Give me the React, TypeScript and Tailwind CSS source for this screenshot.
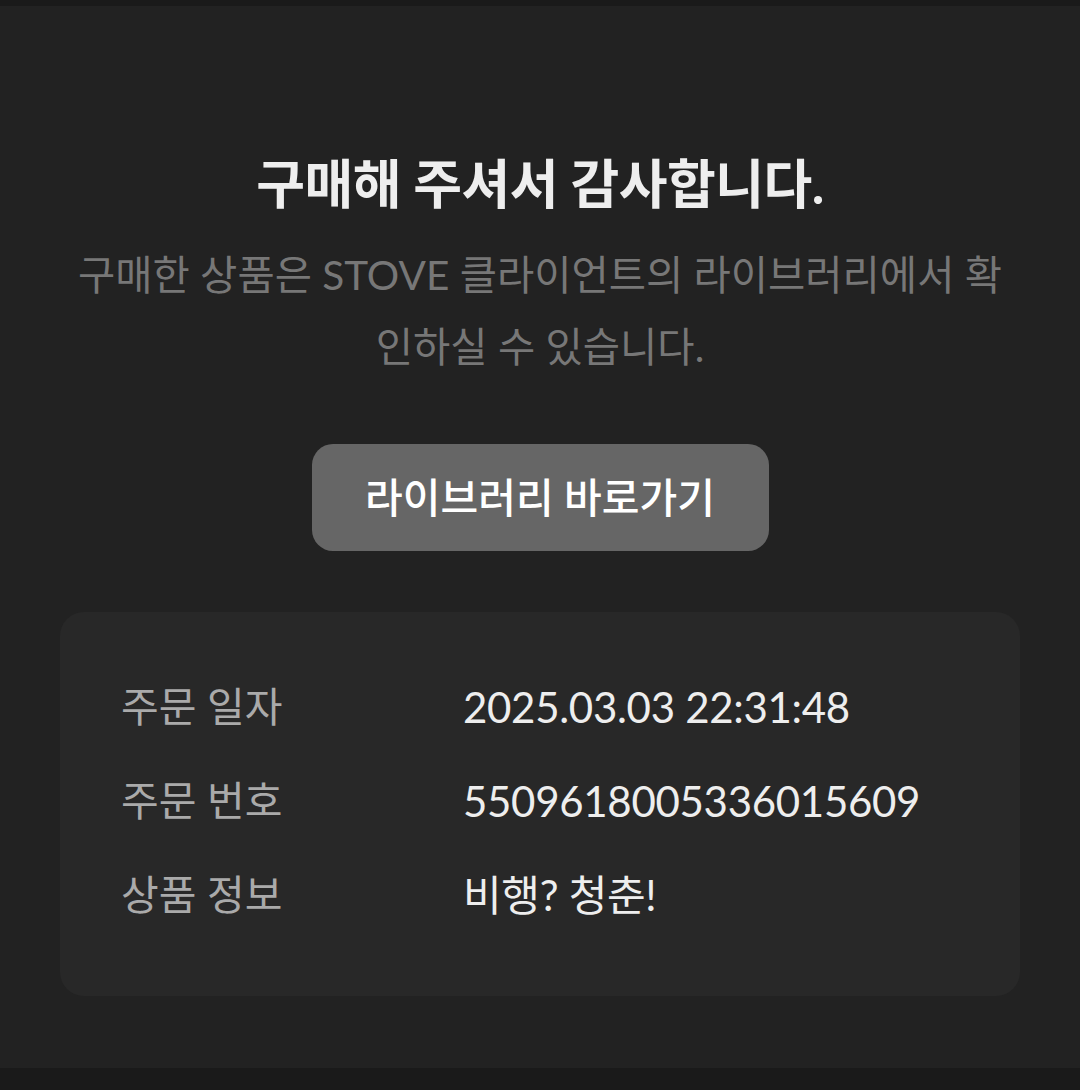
import React from "react";

const font = { fontFamily: 'Lato, "Noto Sans CJK KR", sans-serif' };

export default function App() {
  const rows: [string, string][] = [
    ["주문 일자", "2025.03.03 22:31:48"],
    ["주문 번호", "5509618005336015609"],
    ["상품 정보", "비행? 청춘!"],
  ];
  return (
    <div className="w-[1080px] min-h-[1090px] bg-[#1a1a1a] flex flex-col" style={font}>
      <div className="h-[6px] bg-[#1a1a1a]" />
      <main className="bg-[#222222] flex flex-col items-center pt-[142px] pb-[72px]">
        <h1 className="text-[53px] leading-[72px] font-bold text-[#eeeeee] text-center tracking-[-0.5px]">
          구매해 주셔서 감사합니다.
        </h1>
        <p className="mt-[19px] px-[40px] text-[40.5px] leading-[72px] text-[#777777] text-center whitespace-nowrap">
          구매한 상품은 STOVE 클라이언트의 라이브러리에서 확<br />인하실 수 있습니다.
        </p>
        <button className="mt-[61px] w-[457px] h-[107px] rounded-[21px] bg-[#666666] text-white text-[41px] font-medium flex items-center justify-center">
          라이브러리 바로가기
        </button>
        <section className="mt-[61px] w-[960px] rounded-[24px] bg-[#282828] px-[61px] pt-[60px] pb-[66px] flex flex-col gap-[24px]">
          {rows.map(([k, v]) => (
            <div key={k} className="flex items-center h-[70px]">
              <div className="w-[342px] text-[41px] text-[#aaaaaa]">{k}</div>
              <div className="text-[42px] text-[#eeeeee] tracking-[-0.3px]">{v}</div>
            </div>
          ))}
        </section>
      </main>
      <div className="flex-1 bg-[#1a1a1a]" />
    </div>
  );
}
